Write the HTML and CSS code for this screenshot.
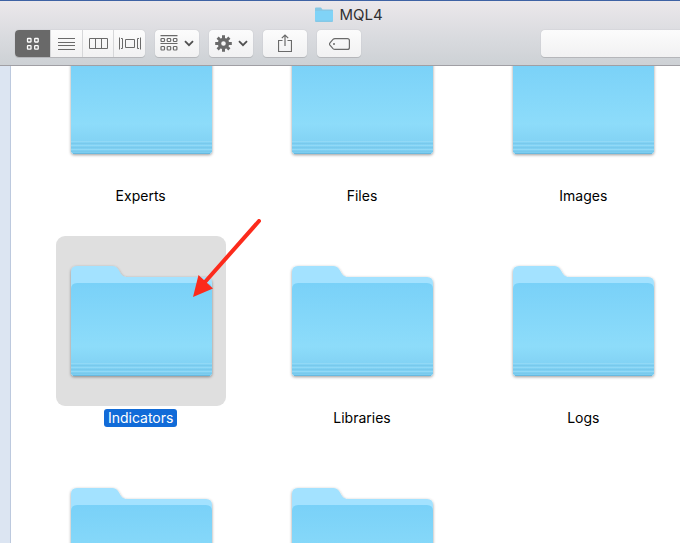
FILE: index.html
```html
<!DOCTYPE html>
<html lang="en">
<head>
<meta charset="utf-8">
<title>MQL4</title>
<link rel="stylesheet" href="styles.css">
</head>
<body>
<svg class="defs" aria-hidden="true">
  <defs>
    <linearGradient id="front" x1="0" y1="0" x2="0" y2="1">
      <stop offset="0" stop-color="#79d1f8"/>
      <stop offset="0.68" stop-color="#8ddcfa"/>
      <stop offset="0.84" stop-color="#84d4f5"/>
      <stop offset="1" stop-color="#7bcdf0"/>
    </linearGradient>
    <filter id="shadow" x="-10%" y="-10%" width="120%" height="120%">
      <feDropShadow dx="0" dy="1" stdDeviation="1.4" flood-color="#000" flood-opacity="0.4"/>
    </filter>
    <symbol id="folder" viewBox="0 0 170 170">
      <g filter="url(#shadow)">
        <path fill="#a3e2ff" d="M15 36q0-6 6-6h35q4 0 6 3l3 5q2 3 5 3h80q6 0 6 6v89q0 4-4 4H19q-4 0-4-4z"/>
        <path fill="url(#front)" d="M15 53q0-6 6-6h129q6 0 6 6v83q0 4-4 4H19q-4 0-4-4z"/>
      </g>
      <path stroke="#92d9f6" stroke-width="1" d="M15 127.500h141M15 131.500h141M15 135.500h141"/>
      <path stroke="#79c9ec" stroke-width="1" d="M15 129.500h141M15 133.500h141M15 137.500h141"/>
      <path stroke="#68b9df" stroke-width="1" d="M17 139.500h137"/>
    </symbol>
    <symbol id="chevron" viewBox="0 0 10 7">
      <path fill="none" stroke="#505050" stroke-width="1.8" d="M1 1.200l4 4 4-4"/>
    </symbol>
  </defs>
</svg>
<div class="window">
  <header class="chrome">
    <h1 class="title">
      <svg class="title-icon" viewBox="0 0 18 15" aria-hidden="true"><path fill="#85c8e6" d="M0 1.500Q0 .5 1 .5h5l1.500 2H17q1 0 1 1V14q0 1-1 1H1q-1 0-1-1z"/><path fill="#80d3f7" d="M0 4h18v9.500H0z"/></svg>
      MQL4
    </h1>
    <div class="toolbar">
      <div class="segments">
        <button class="segment active" aria-label="Icon view"><svg width="14" height="14" viewBox="0 0 14 14"><g fill="none" stroke="#fff" stroke-width="1.300"><rect x="1.500" y="1.500" width="3.500" height="3.500" rx=".5"/><rect x="8.700" y="1.500" width="3.500" height="3.500" rx=".5"/><rect x="1.500" y="8.700" width="3.500" height="3.500" rx=".5"/><rect x="8.700" y="8.700" width="3.500" height="3.500" rx=".5"/></g></svg></button>
        <button class="segment" aria-label="List view"><svg width="17" height="14" viewBox="0 0 17 14"><path stroke="#6a6a6a" d="M0 1.500h17M0 5.500h17M0 8.500h17M0 12.500h17"/></svg></button>
        <button class="segment" aria-label="Column view"><svg width="19" height="13" viewBox="0 0 19 13"><path fill="none" stroke="#6a6a6a" d="M.5 1.500h18v10H.5zM6.500 1.500v10M12.500 1.500v10"/></svg></button>
        <button class="segment" aria-label="Gallery view"><svg width="22" height="13" viewBox="0 0 22 13"><path fill="none" stroke="#6a6a6a" d="M.5.5v12M21.500.5v12M2 1.500h1.500v10H2M20 1.500h-1.500v10H20M6.500 2.500h9v8h-9z"/></svg></button>
      </div>
      <button class="tool" aria-label="Arrange"><svg width="18" height="17" viewBox="0 0 18 17"><g fill="none" stroke="#6a6a6a" stroke-width="1.200"><path d="M.5.6h17M.5 8.500h17"/><rect x="1" y="3.500" width="3.500" height="3" rx=".8"/><rect x="7.200" y="3.500" width="3.500" height="3" rx=".8"/><rect x="13.400" y="3.500" width="3.500" height="3" rx=".8"/><rect x="1" y="11.500" width="3.500" height="3.500" rx=".8"/><rect x="7.200" y="11.500" width="3.500" height="3.500" rx=".8"/><rect x="13.400" y="11.500" width="3.500" height="3.500" rx=".8"/></g></svg><svg width="10" height="7"><use href="#chevron"/></svg></button>
      <button class="tool" aria-label="Action"><svg width="17" height="17" viewBox="-8.500 -8.500 17 17"><circle r="4" fill="none" stroke="#6a6a6a" stroke-width="3.400"/><g stroke="#6a6a6a" stroke-width="3"><path d="M0-8.300v3.300M0 8.300v-3.300M-8.300 0h3.300M8.300 0h-3.300"/><path transform="rotate(45)" d="M0-8.300v3.300M0 8.300v-3.300M-8.300 0h3.300M8.300 0h-3.300"/></g></svg><svg width="10" height="7"><use href="#chevron"/></svg></button>
      <button class="tool" aria-label="Share"><svg class="share" width="14" height="18" viewBox="0 0 14 18"><path fill="none" stroke="#6a6a6a" stroke-width="1.200" d="M4.500 6.500h-4v11h13v-11h-4M7 12V1M3.800 4.200L7 1l3.200 3.200"/></svg></button>
      <button class="tool" aria-label="Edit tags"><svg width="21" height="12" viewBox="0 0 21 12"><path fill="none" stroke="#6a6a6a" stroke-width="1.200" d="M6 .6h12.400q2 0 2 2v6.800q0 2-2 2H6Q4.800 11.400 4 10.600L1 7.200q-1-1.200 0-2.400l3-3.400Q4.800.6 6 .6z"/><circle cx="5" cy="6" r="1" fill="#6a6a6a"/></svg></button>
      <input class="search" type="search" aria-label="Search">
    </div>
  </header>
  <div class="content">
    <aside class="sidebar"></aside>
    <main class="files">
      <ul class="grid">
        <li class="item"><svg class="icon"><use href="#folder"/></svg><span class="name">Experts</span></li>
        <li class="item"><svg class="icon"><use href="#folder"/></svg><span class="name">Files</span></li>
        <li class="item"><svg class="icon"><use href="#folder"/></svg><span class="name">Images</span></li>
        <li class="item selected"><svg class="icon"><use href="#folder"/></svg><span class="name">Indicators</span>
          <svg class="arrow" viewBox="0 0 68 78" aria-hidden="true"><path stroke="#fc2b1c" stroke-width="4" stroke-linecap="round" d="M66 2L12 63"/><path fill="#fc2b1c" d="M0 78L5.500 56 20 69.500z"/></svg></li>
        <li class="item"><svg class="icon"><use href="#folder"/></svg><span class="name">Libraries</span></li>
        <li class="item"><svg class="icon"><use href="#folder"/></svg><span class="name">Logs</span></li>
        <li class="item"><svg class="icon"><use href="#folder"/></svg></li>
        <li class="item"><svg class="icon"><use href="#folder"/></svg></li>
      </ul>
    </main>
  </div>
</div>
</body>
</html>
```
FILE: styles.css
```css
* {
  box-sizing: border-box;
}

body {
  margin: 0;
  height: 100vh;
  overflow: hidden;
  background: #fff;
  color: #000;
  font-family: Inter, "Liberation Sans", sans-serif;
}

.defs {
  position: absolute;
  width: 0;
  height: 0;
}

/* The window runs past the right edge of the screen. */
.window {
  display: flex;
  flex-direction: column;
  height: 100%;
  margin-right: -18px;
}

.chrome {
  flex: none;
  padding-bottom: 8px;
  border-top: 1px solid #3e62a4;
  border-bottom: 1px solid #a09fa4;
  background: linear-gradient(#ebe8eb, #dbdce0 50%, #cdd1d5);
}

.title {
  display: flex;
  align-items: center;
  justify-content: center;
  gap: 6px;
  height: 27px;
  margin: 0 0 2px;
  color: #303032;
  font-size: 15px;
  font-weight: 400;
}

.title-icon {
  width: 18px;
  height: 15px;
}

.toolbar {
  display: flex;
  gap: 10px;
  height: 27px;
  padding-left: 15px;
}

.segments,
.tool,
.search {
  border: 0;
  border-radius: 4px;
  background: linear-gradient(#fcfcfc, #f1f1f2);
  box-shadow: 0 0 1px #a5a7ab, 0 1px 0 #b7b9bc;
}

.segments {
  display: flex;
  width: 130px;
  overflow: hidden;
}

.segment {
  display: flex;
  flex: 1;
  align-items: center;
  justify-content: center;
  padding: 0;
  border: 0;
  border-left: 1px solid #d6d7d9;
  background: none;
}

.segment.active {
  flex: 0 0 35px;
  border: 0;
  background: #696969;
}

.tool {
  display: flex;
  align-items: center;
  justify-content: center;
  gap: 6px;
  width: 44px;
  padding: 0;
}

.share {
  margin-bottom: 2px;
}

.search {
  flex: 1;
  min-width: 0;
  margin-left: 170px;
}

.content {
  display: flex;
  flex: 1;
  min-height: 0;
}

.sidebar {
  flex: none;
  width: 11px;
  border-right: 1px solid #bcc9de;
  background: #dce5f2;
}

.files {
  flex: 1;
  overflow: hidden;
}

/* Scrolled down so that the first row is partly hidden. */
.grid {
  display: grid;
  grid-template-columns: repeat(3, 1fr);
  row-gap: 31px;
  margin: -52px 0 0;
  padding: 0 4px 0 19px;
  list-style: none;
}

.item {
  position: relative;
  display: flex;
  flex-direction: column;
  align-items: center;
  gap: 3px;
}

.icon {
  width: 170px;
  height: 170px;
  border-radius: 9px;
}

.name {
  padding: 0 4px;
  border-radius: 3px;
  font-size: 14px;
  line-height: 18px;
}

.selected .icon {
  background: #dfdfdf;
}

.selected .name {
  background: #116bd8;
  color: #fff;
}

.arrow {
  position: absolute;
  top: -17px;
  left: calc(50% + 52px);
  z-index: 1;
  width: 68px;
  height: 78px;
}
```
